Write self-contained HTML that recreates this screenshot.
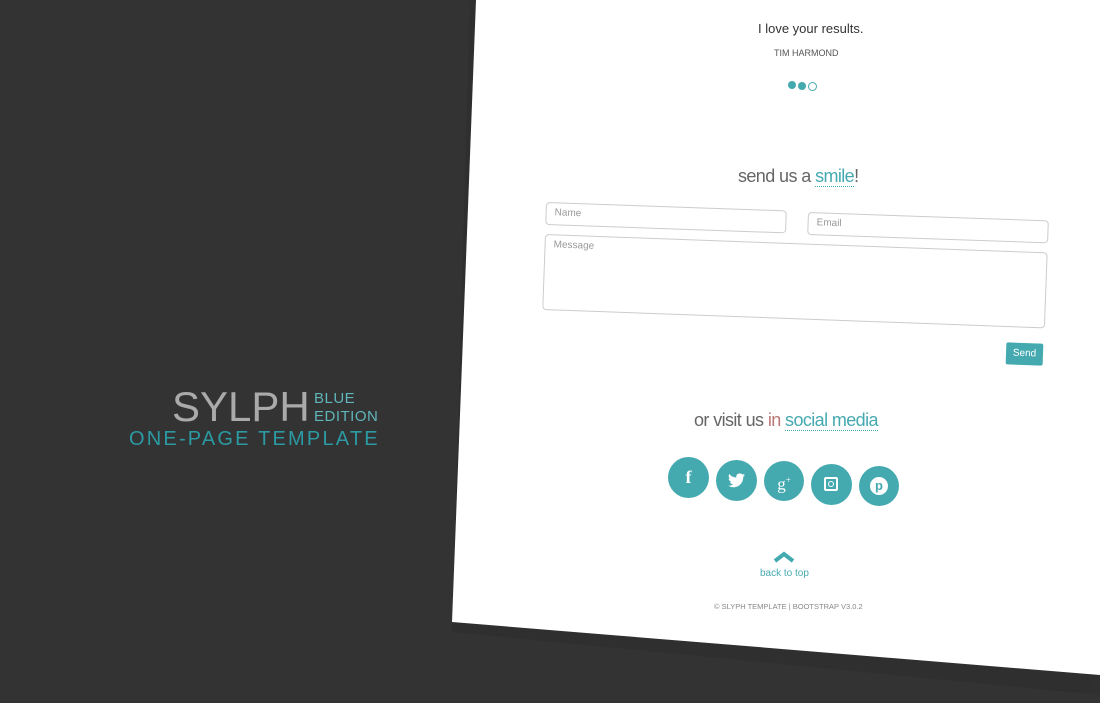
<!DOCTYPE html>
<html><head><meta charset="utf-8"><style>
*{margin:0;padding:0;box-sizing:border-box}
body{width:1100px;height:703px;overflow:hidden;background:#333;position:relative;font-family:"Liberation Sans",sans-serif}
.shadow{position:absolute;left:0;top:0;width:1100px;height:703px;background:#2d2d2d;clip-path:polygon(470px 0,1100px 0,1100px 695px,452px 632px);filter:blur(8px);opacity:.6}
.page{position:absolute;left:0;top:0;width:1100px;height:703px;background:#fff;clip-path:polygon(476px 0,1100px 0,1100px 675px,452px 622px)}
.a{position:absolute;white-space:nowrap}
.teal{color:#45aab0}
.box{position:absolute;border:1px solid #ccc;border-radius:4px;transform-origin:0 0;font-size:10px;color:#999;padding:4px 8px}
.c{position:absolute;border-radius:50%;background:#45aab0;color:#fff;text-align:center;font-weight:bold}
</style></head><body>
<div class="shadow"></div>
<div class="page"></div>
<div class="a" style="left:172px;top:386px;font-size:42px;color:#aaa;line-height:42px">SYLPH</div>
<div class="a" style="left:314px;top:390px;font-size:15px;color:#5fb5ba;line-height:18px;letter-spacing:.5px">BLUE<br>EDITION</div>
<div class="a" style="left:129px;top:428px;font-size:20px;color:#2b9aa3;letter-spacing:2.2px">ONE-PAGE TEMPLATE</div>

<div class="a" style="left:758px;top:21px;font-size:13px;color:#333">I love your results.</div>
<div class="a" style="left:774px;top:48px;font-size:9px;color:#555">TIM HARMOND</div>
<div class="a" style="left:788px;top:81px;width:8px;height:8px;border-radius:50%;background:#45aab0"></div>
<div class="a" style="left:798px;top:82px;width:8px;height:8px;border-radius:50%;background:#45aab0"></div>
<div class="a" style="left:808px;top:82px;width:9px;height:9px;border-radius:50%;border:1.5px solid #45aab0"></div>

<div class="a" style="left:738px;top:166px;font-size:18px;color:#666;letter-spacing:-.6px">send us a <span class="teal" style="border-bottom:1px dotted #45aab0">smile</span>!</div>
<div class="box" style="left:546px;top:202px;width:241px;height:23px;transform:rotate(2deg)">Name</div>
<div class="box" style="left:808px;top:212px;width:241px;height:23px;transform:rotate(2deg)">Email</div>
<div class="box" style="left:545px;top:234px;width:503px;height:76px;transform:rotate(2.1deg)">Message</div>
<div class="a" style="left:1006px;top:343px;width:37px;height:22px;background:#45aab0;border-radius:2px;color:#fff;font-size:10px;text-align:center;line-height:22px;transform:rotate(2deg)">Send</div>

<div class="a" style="left:694px;top:410px;font-size:18px;color:#666;letter-spacing:-.6px">or visit us <span style="color:#b77">in</span> <span class="teal" style="border-bottom:1px dotted #45aab0">social media</span></div>
<div class="c" style="left:668px;top:457px;width:41px;height:41px;line-height:41px;font-size:18px;font-family:'Liberation Serif',serif">f</div>
<div class="c" style="left:716px;top:460px;width:41px;height:41px"><svg style="position:absolute;left:12px;top:13px" width="17" height="15" viewBox="0 0 24 20"><path d="M24 2.4a10 10 0 0 1-2.8.8A5 5 0 0 0 23.3.4a10 10 0 0 1-3.1 1.2A4.9 4.9 0 0 0 11.8 6 14 14 0 0 1 1.7.9a4.9 4.9 0 0 0 1.5 6.6A4.9 4.9 0 0 1 1 6.9a4.9 4.9 0 0 0 3.9 4.9 5 5 0 0 1-2.2.1 4.9 4.9 0 0 0 4.6 3.4A9.9 9.9 0 0 1 0 17.3 14 14 0 0 0 7.5 19.5c9.1 0 14-7.5 14-14v-.6A10 10 0 0 0 24 2.4z" fill="#fff"/></svg></div>
<div class="c" style="left:764px;top:461px;width:40px;height:40px;line-height:38px;font-size:17px;font-family:'Liberation Serif',serif;font-weight:normal">g<sup style="font-size:9px">+</sup></div>
<div class="c" style="left:811px;top:464px;width:41px;height:41px"><div style="position:absolute;left:13px;top:13px;width:14px;height:14px;border:2px solid #fff;border-radius:2px"><div style="position:absolute;left:2px;top:2px;width:6px;height:6px;border:1.5px solid #fff;border-radius:50%"></div></div></div>
<div class="c" style="left:859px;top:466px;width:40px;height:40px"><div style="position:absolute;left:11px;top:11px;width:18px;height:18px;border-radius:50%;background:#fff;color:#45aab0;font-size:13px;line-height:18px">p</div></div>

<svg class="a" style="left:773px;top:551px" width="22" height="12"><path d="M2 10 L11 3 L20 10" stroke="#45aab0" stroke-width="4" fill="none"/></svg>
<div class="a teal" style="left:760px;top:568px;font-size:10px">back to top</div>
<div class="a" style="left:714px;top:602px;font-size:7.5px;color:#888">© SLYPH TEMPLATE | BOOTSTRAP V3.0.2</div>
</body></html>
